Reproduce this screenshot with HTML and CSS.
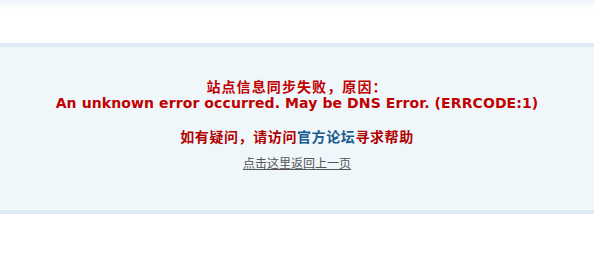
FILE: index.html
```html
<!DOCTYPE html>
<html lang="zh-CN">
<head>
<meta charset="utf-8">
<title>提示信息</title>
<link rel="stylesheet" href="styles.css">
</head>
<body>
<div class="topbar"></div>
<div class="msgbox">
  <p class="reason"><span class="cn">站点信息同步失败，原因：</span><br><span class="en">An unknown error occurred. May be DNS Error. (ERRCODE:1)</span></p>
  <p class="help">如有疑问，请访问<a class="forum" href="#">官方论坛</a>寻求帮助</p>
  <p class="back"><a href="#">点击这里返回上一页</a></p>
</div>
</body>
</html>
```

FILE: styles.css
```css
html, body {
  margin: 0;
  padding: 0;
  background: #ffffff;
}
body {
  font-family: "Noto Sans CJK SC", "DejaVu Sans", sans-serif;
  font-size: 12px;
}
.topbar {
  height: 43px;
  background: linear-gradient(#ecf3fa, #ffffff 9px);
}
.msgbox {
  background: #f0f7fb;
  border-top: 4px solid #dfeaf5;
  border-bottom: 4px solid #dfeaf5;
  padding: 31px 0 38px;
  text-align: center;
}
.msgbox p {
  margin: 0;
}
.reason {
  color: #c00000;
  font-weight: bold;
  font-size: 14px;
  line-height: 16px;
}
.reason .cn {
  font-family: "Noto Sans CJK SC", sans-serif;
  letter-spacing: 1.1px;
}
.reason .en {
  font-family: "DejaVu Sans", "Liberation Sans", sans-serif;
  font-size: 14px;
  letter-spacing: 0.1px;
}
.help {
  margin-top: 16px !important;
  color: #b00000;
  font-weight: bold;
  font-size: 14px;
  line-height: 18px;
  letter-spacing: 0.6px;
}
.help .forum {
  color: #1b5c8f;
  text-decoration: none;
}
.back {
  margin-top: 9px !important;
  font-size: 12px;
  line-height: 18px;
}
.back a {
  color: #555555;
  text-decoration: underline;
}
```
